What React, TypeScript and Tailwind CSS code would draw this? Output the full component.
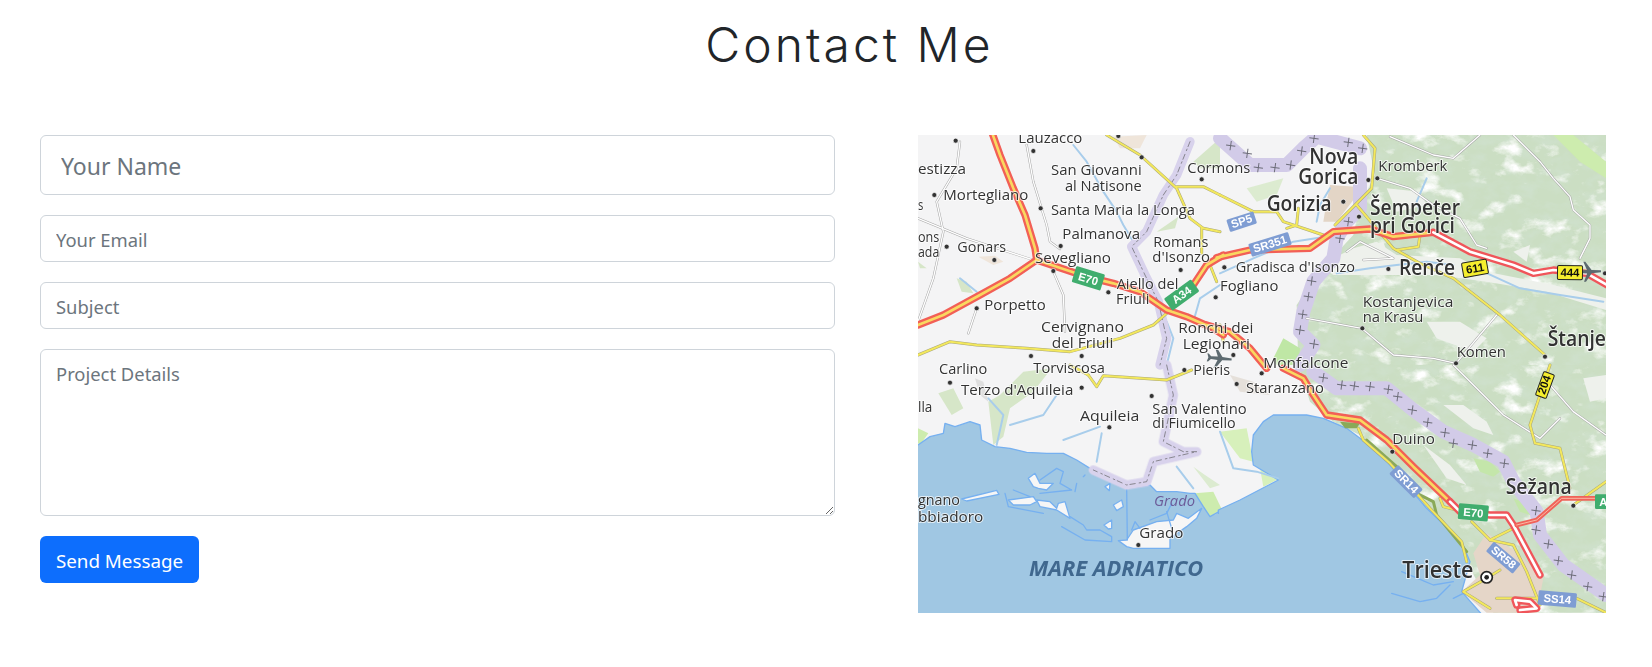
type Q = 'nw' | 'ne' | 'sw' | 'se';

// map coordinates are written per quadrant, at 3x, then scaled down
const T: Record<Q, string> = {
  nw: 'translate(900 125) scale(.33333)',
  ne: 'translate(1220 125) scale(.33333)',
  sw: 'translate(900 365) scale(.33333)',
  se: 'translate(1220 365) scale(.33333)',
};

const green: [Q, string][] = [
  ['ne', '440,30 1158,30 1158,720 235,720 230,540 285,460 340,395 400,330 420,240 465,150'],
  ['se', '235,0 1158,0 1158,743 820,743 725,560 620,430 505,295 420,210 340,170 270,110'],
];
const greenPatch: [Q, string, string][] = [
  ['ne', '1000,30 1060,30 1158,110 1158,160 1080,110', '#cdecae'],
  ['ne', '160,700 190,640 240,670 235,720 170,720', '#bfe7a5'],
  ['se', '760,280 810,290 840,320 820,335 780,320', '#c4e6aa'],
  ['se', '880,400 930,420 930,450 900,440', '#c4e6aa'],
  ['se', '0,200 80,190 100,290 60,280', '#d7f0bb'],
  ['se', '120,310 180,340 130,365', '#d7f0bb'],
  ['sw', '300,90 370,20 455,10 400,80 330,130 310,215 280,240 265,110', '#d6e6c8'],
  ['sw', '115,85 160,70 190,130 155,150', '#d6e6c8'],
  ['sw', '54,190 85,205 60,240 54,235', '#cdecae'],
  ['sw', '880,305 915,330 960,360 930,370', '#dcebd0'],
  ['nw', '170,460 200,470 220,505 185,500', '#d6e6c8'],
  ['nw', '770,320 835,275 825,310', '#d6e6c8'],
  ['nw', '54,410 80,430 60,430', '#d6e6c8'],
  ['nw', '880,110 960,40 960,130 900,130', '#d6e6c8'],
  ['ne', '80,190 190,160 170,210 110,230', '#dcebd0'],
];
const white: [Q, string][] = [
  ['ne', '400,370 470,350 530,390 720,400 800,440 1000,480 1158,520 1158,555 980,500 800,470 650,450 500,450 340,450 300,420'],
  ['ne', '620,590 720,590 800,640 760,680 650,640'],
  ['se', '670,120 730,120 800,170 820,210 760,190'],
  ['se', '1090,40 1158,30 1158,100 1110,110'],
  ['se', '610,240 690,300 740,360 680,340'],
  ['ne', '880,380 930,360 920,410'],
  ['ne', '500,190 600,200 620,240 530,260'],
  ['ne', '450,360 490,350 500,380 450,380'],
];
const beige: [Q, string, string][] = [
  ['ne', '330,180 405,185 400,225 350,290 310,290 318,240', '#e3d5c6'],
  ['se', '760,565 800,505 890,560 970,640 950,743 800,743 725,680 780,630', '#e5d6c8'],
  ['nw', '235,395 285,392 310,410 280,420', '#efe5da'],
  ['nw', '640,35 740,30 720,70 660,70', '#efe5da'],
  ['sw', '225,40 250,50 265,110 240,90', '#dedede'],
  ['se', '30,30 100,50 150,90 60,80', '#e5e0da'],
];
const seaW = '40,240 54,240 90,215 130,205 135,175 165,185 210,170 240,180 245,225 285,245 330,250 380,262 440,265 490,265 530,285 570,310 620,335 680,370 750,360 770,380 830,380 870,385 885,385 910,425 930,455 965,435 965,765 40,765';
const seaE = '-5,435 60,405 175,345 125,315 100,300 95,260 100,210 130,170 160,150 260,150 310,160 380,190 420,220 505,295 620,430 725,530 750,590 725,680 800,765 -5,765';
const islands: string[] = [
  '655,527 680,525 700,495 770,470 820,465 830,445 865,460 905,430 890,460 860,485 810,520 810,550 700,550 680,545',
  '385,340 405,325 420,355 460,355 440,375 415,370 400,365',
  '325,405 400,395 410,410 390,420 340,420',
  '410,405 450,410 470,430 475,415 495,410 510,460 470,435 420,425',
  '640,420 665,405 670,425 650,437',
  '615,365 630,355 628,377',
  '612,480 635,465 635,490 625,492',
  '185,402 290,376 297,388 200,408',
];
const lagoon: [Q, string][] = [
  ['sw', '315,385 325,425 430,445'],
  ['sw', '340,375 390,395'],
  ['sw', '420,345 470,310 490,320 480,355 515,375 420,385'],
  ['sw', '485,485 555,525 635,530 635,515 600,495 560,495 550,480 510,455'],
  ['sw', '680,370 682,525'],
  ['sw', '695,495 705,470 720,490'],
  ['sw', '750,465 800,445 815,415'],
  ['sw', '800,440 815,490'],
  ['sw', '555,330 550,335'],
  ['sw', '530,355 525,380'],
  ['se', '545,620 640,660 700,650'],
  ['se', '515,685 600,710 650,700 690,660'],
  ['se', '730,685 700,700'],
];
const rivers: [Q, string][] = [
  ['nw', '520,60 560,110 610,200 650,260 670,300 700,350'],
  ['nw', '880,590 900,520 960,480'],
  ['nw', '800,590 820,640 800,720'],
  ['ne', '0,445 100,400 220,350 350,330'],
  ['ne', '330,190 300,240 290,290'],
  ['ne', '350,445 450,430 530,420 620,410 700,420'],
  ['ne', '620,160 590,230 600,260'],
  ['ne', '790,440 900,490 1020,510 1150,530'],
  ['sw', '265,100 310,150 290,240'],
  ['sw', '470,90 430,150 330,180'],
  ['sw', '490,225 600,185'],
  ['sw', '605,205 590,290'],
  ['sw', '830,305 880,370'],
  ['se', '0,200 40,310 110,320 175,340'],
  ['nw', '180,460 230,500'],
];
const borderWide: [Q, string][] = [
  ['ne', '0,40 90,120 200,120 250,70 290,35 420,70'],
  ['ne', '420,130 420,250 380,290 350,340 340,400 280,470 250,560 240,620 280,660 240,720'],
  ['se', '280,20 350,70 500,70 580,135 670,200 760,240 850,290 880,350 950,440 960,510 1030,600 1158,690'],
];
const borderNarrow: [Q, string][] = [
  ['nw', '870,50 830,150 790,210 740,320 695,365 735,450 775,530 800,640 780,720'],
  ['sw', '800,0 820,90 790,230 850,260 890,260 760,290 740,350 680,360 580,315'],
];
const crosses: [Q, number, number][] = [
  ['ne', 32, 62], ['ne', 82, 85], ['ne', 115, 128], ['ne', 165, 128], ['ne', 212, 120], ['ne', 245, 78], ['ne', 282, 40],
  ['ne', 385, 52], ['ne', 428, 70], ['ne', 385, 290], ['ne', 360, 340], ['ne', 275, 468], ['ne', 265, 515], ['ne', 248, 568], ['ne', 240, 615], ['ne', 282, 657],
  ['se', 310, 38], ['se', 365, 60], ['se', 403, 63], ['se', 450, 65], ['se', 505, 73], ['se', 533, 95], ['se', 577, 135], ['se', 623, 172], ['se', 675, 203], ['se', 700, 235], ['se', 757, 240], ['se', 803, 265], ['se', 853, 295],
  ['se', 948, 437], ['se', 948, 495], ['se', 985, 537], ['se', 1015, 587], ['se', 1055, 630], ['se', 1103, 665], ['se', 1150, 695],
];
const thin: [Q, string][] = [
  ['nw', '380,60 400,170 440,300 450,350 480,372'],
  ['nw', '54,280 200,340 400,405'],
  ['nw', '460,440 490,510 495,620'],
  ['nw', '180,50 170,130 110,230 130,320 100,460 54,590'],
  ['nw', '230,550 205,625'],
  ['ne', '880,30 960,110 1000,160 1050,215 1060,255 1110,300 1110,340 1080,400'],
  ['ne', '780,30 700,100 640,90 510,35'],
  ['ne', '472,160 570,190 640,240 720,280 770,360 800,370'],
  ['ne', '430,405 520,400 420,350 380,380'],
  ['ne', '260,580 425,610 520,690 640,700 708,715 830,570'],
  ['se', '700,0 770,70 850,150 960,220 1020,160'],
  ['se', '990,60 1060,140 1158,210'],
];
const yellow: [Q, string][] = [
  ['nw', '620,30 720,90 830,190 870,280 910,310 960,320'],
  ['nw', '830,185 910,185 960,210'],
  ['nw', '54,690 150,650 230,660 380,670 510,680 660,640 760,600 800,565'],
  ['nw', '905,310 905,385'],
  ['nw', '930,420 950,470'],
  ['sw', '565,30 590,65 610,32 800,45 875,15'],
  ['sw', '510,0 565,30'],
  ['ne', '430,30 465,70 455,190 410,235 345,300'],
  ['ne', '0,210 100,260 170,260 190,290 310,330'],
  ['ne', '235,250 230,300 200,310'],
  ['ne', '410,240 520,370 600,415 700,460 840,570 975,690'],
  ['ne', '600,330 595,365 530,375'],
  ['ne', '0,600 10,650'],
  ['se', '990,0 930,180 945,235 1020,250 1050,370'],
  ['se', '415,190 430,225 510,295 630,430 725,530 740,590'],
  ['se', '660,400 670,425 710,435'],
  ['se', '755,470 810,525 880,540 920,620 960,720'],
  ['se', '810,525 890,485'],
  ['se', '1060,420 1158,350'],
  ['se', '840,615 800,640 730,680 810,730'],
  ['se', '830,700 960,700'],
  ['se', '1070,700 1158,743'],
];
const motorway: [Q, string][] = [
  ['nw', '275,20 300,90 340,190 375,270 405,370 410,405'],
  ['nw', '410,405 330,460 240,510 130,570 54,600'],
  ['nw', '410,405 470,425 560,455 640,475 720,500 800,555 860,575 940,610 970,630'],
  ['nw', '870,495 920,420 970,390'],
  ['ne', '-10,398 90,375 270,370 340,320 450,312 520,335 640,322'],
  ['ne', '-40,600 30,620 90,670 140,730'],
  ['se', '190,10 250,40 280,90 320,150 420,165 500,225 580,305 690,410'],
];
const whiteway: [Q, string][] = [
  ['ne', '640,322 750,380 880,420 940,445 1000,435 1100,445 1170,485'],
  ['se', '690,410 720,440 810,450 860,450 880,480 960,630'],
  ['se', '890,720 885,705 930,710 950,730 900,735'],
];
const redOnly: [Q, string][] = [
  ['se', '890,480 950,465 1025,400 1158,400'],
];
const dots: [Q, number, number][] = [
  ['nw', 167, 47], ['nw', 400, 78], ['nw', 103, 210], ['nw', 422, 250], ['nw', 482, 363], ['nw', 140, 365], ['nw', 283, 405], ['nw', 460, 438], ['nw', 625, 502], ['nw', 230, 550], ['nw', 545, 693], ['nw', 393, 693], ['nw', 725, 97], ['nw', 655, 33], ['nw', 905, 163], ['nw', 842, 435], ['nw', 947, 517],
  ['ne', 445, 165], ['ne', 472, 160], ['ne', 370, 230], ['ne', 417, 275], ['ne', 505, 432], ['ne', 13, 427], ['ne', 427, 610], ['ne', 975, 695], ['ne', 1155, 445], ['ne', 708, 715], ['ne', 40, 690],
  ['sw', 150, 53], ['sw', 545, 68], ['sw', 755, 93], ['sw', 628, 187], ['sw', 853, 15], ['sw', 715, 540],
  ['se', 125, 25], ['se', 50, 57], ['se', 517, 260], ['se', 1060, 422],
];
// text, x, baseline, width, size
const labels: [Q, string, number, number, number, number][] = [
  ['nw', 'Lauzacco', 355, 55, 192, 45],
  ['nw', 'estizza', 54, 146, 144, 45],
  ['nw', 'Mortegliano', 130, 225, 255, 45],
  ['nw', 's', 54, 255, 16, 45],
  ['nw', 'ons', 54, 352, 64, 45],
  ['nw', 'ada', 54, 395, 64, 45],
  ['nw', 'Gonars', 172, 380, 146, 45],
  ['nw', 'San Giovanni', 453, 150, 272, 45],
  ['nw', 'al Natisone', 495, 197, 230, 45],
  ['nw', 'Santa Maria la Longa', 453, 270, 432, 45],
  ['nw', 'Palmanova', 487, 343, 233, 45],
  ['nw', 'Romans', 760, 367, 165, 45],
  ['nw', "d'Isonzo", 757, 410, 173, 45],
  ['nw', 'Sevegliano', 405, 415, 228, 45],
  ['nw', 'Aiello del', 650, 492, 185, 45],
  ['nw', 'Friuli', 648, 536, 100, 45],
  ['nw', 'Porpetto', 253, 555, 184, 45],
  ['nw', 'Cervignano', 423, 620, 249, 45],
  ['nw', 'del Friuli', 455, 668, 185, 45],
  ['nw', 'Cormons', 862, 145, 189, 45],
  ['nw', 'Ronchi dei', 835, 623, 225, 45],
  ['nw', 'Legionari', 848, 672, 202, 45],
  ['sw', 'Torviscosa', 400, 25, 215, 45],
  ['sw', 'Carlino', 117, 28, 145, 45],
  ['sw', "Terzo d'Aquileia", 183, 90, 337, 45],
  ['sw', 'Aquileia', 540, 168, 178, 45],
  ['sw', 'San Valentino', 757, 147, 283, 45],
  ['sw', 'di Fiumicello', 757, 190, 250, 45],
  ['sw', 'Pieris', 880, 30, 110, 45],
  ['sw', 'lla', 54, 142, 43, 45],
  ['sw', 'gnano', 54, 420, 126, 42],
  ['sw', 'bbiadoro', 54, 470, 196, 42],
  ['sw', 'Grado', 718, 518, 132, 45],
  ['ne', 'Kromberk', 475, 137, 207, 45],
  ['ne', "Gradisca d'Isonzo", 47, 442, 358, 45],
  ['ne', 'Fogliano', 0, 497, 175, 45],
  ['ne', 'Kostanjevica', 428, 545, 272, 45],
  ['ne', 'na Krasu', 428, 590, 182, 45],
  ['ne', 'Komen', 710, 697, 148, 45],
  ['ne', 'Monfalcone', 130, 729, 255, 45],
  ['se', 'Staranzano', 78, 85, 234, 45],
  ['se', 'Duino', 517, 237, 128, 45],
];
const bigLabels: [Q, string, number, number, number, number][] = [
  ['ne', 'Nova', 268, 118, 147, 62],
  ['ne', 'Gorica', 235, 178, 180, 62],
  ['ne', 'Gorizia', 140, 258, 195, 62],
  ['ne', 'Šempeter', 450, 270, 270, 62],
  ['ne', 'pri Gorici', 450, 325, 255, 62],
  ['ne', 'Renče', 537, 450, 168, 62],
  ['ne', 'Štanje', 983, 662, 175, 62],
  ['se', 'Sežana', 857, 388, 198, 62],
  ['se', 'Trieste', 547, 640, 213, 68],
];
const shields: [Q, string, number, number, number, number, number, string][] = [
  ['nw', 'E70', 565, 460, 90, 50, 17, 'g'],
  ['nw', 'A34', 845, 510, 100, 44, -36, 'g'],
  ['ne', 'SP5', 65, 290, 85, 38, -18, 'b'],
  ['ne', 'SR351', 150, 358, 125, 40, -17, 'b'],
  ['ne', '611', 765, 430, 75, 44, -10, 'y'],
  ['ne', '444', 1050, 443, 75, 42, 1, 'y'],
  ['se', '204', 975, 60, 75, 34, -70, 'y'],
  ['se', 'SR14', 558, 350, 105, 38, 45, 'b'],
  ['se', 'E70', 760, 442, 90, 48, 5, 'g'],
  ['se', 'A', 1150, 410, 50, 44, 0, 'g'],
  ['se', 'SR58', 850, 578, 105, 38, 40, 'b'],
  ['se', 'SS14', 1012, 702, 115, 44, 5, 'b'],
];
const shieldColor: Record<string, string> = { g: '#41ad6e', b: '#7f9dd3', y: '#f5ee2e' };

function Lines({ data, color, w, dash }: { data: [Q, string][]; color: string; w: number; dash?: string }) {
  return (
    <>
      {data.map(([q, pts], i) => (
        <polyline key={i} transform={T[q]} points={pts} fill="none" stroke={color} strokeWidth={w} strokeDasharray={dash} strokeLinejoin="round" strokeLinecap="round" />
      ))}
    </>
  );
}

function Plane({ q, x, y, r }: { q: Q; x: number; y: number; r: number }) {
  return (
    <g transform={`${T[q]} translate(${x} ${y}) rotate(${r})`} fill="#5d6b70">
      <path d="M-3 -38 L3 -38 L5 -10 L30 8 L30 14 L5 4 L4 24 L12 32 L12 36 L0 32 L-12 36 L-12 32 L-4 24 L-5 4 L-30 14 L-30 8 L-5 -10 Z" />
    </g>
  );
}

function MapDrawing() {
  return (
    <svg viewBox="918 135 688 478" width={688} height={478} className="block">
      <defs>
        <filter id="soft" x="0" y="0" width="100%" height="100%">
          <feGaussianBlur stdDeviation="0.35" />
        </filter>
        <filter id="hills" x="0" y="0" width="100%" height="100%">
          <feTurbulence type="fractalNoise" baseFrequency="0.012 0.018" numOctaves={5} seed={7} />
          <feColorMatrix values="0 0 0 0 1  0 0 0 0 1  0 0 0 0 1  4 0 0 0 -2.25" />
          <feComposite in2="SourceAlpha" operator="in" />
        </filter>
        <filter id="shade" x="0" y="0" width="100%" height="100%">
          <feTurbulence type="fractalNoise" baseFrequency="0.02 0.03" numOctaves={4} seed={21} />
          <feColorMatrix values="0 0 0 0 0.62  0 0 0 0 0.75  0 0 0 0 0.6  2.4 0 0 0 -0.95" />
          <feComposite in2="SourceAlpha" operator="in" />
        </filter>
      </defs>
      <rect x="918" y="135" width="688" height="478" fill="#f4f4f5" />
      <g filter="url(#soft)">
        {beige.filter((b) => b[0] === 'sw' || b[2] === '#efe5da').map(([q, pts, c], i) => (
          <polygon key={i} transform={T[q]} points={pts} fill={c} />
        ))}
        {green.map(([q, pts], i) => (
          <polygon key={i} transform={T[q]} points={pts} fill="#cbdec3" />
        ))}
        {green.map(([q, pts], i) => (
          <polygon key={i} transform={T[q]} points={pts} fill="#000" filter="url(#shade)" />
        ))}
        {green.map(([q, pts], i) => (
          <polygon key={i} transform={T[q]} points={pts} fill="#000" filter="url(#hills)" />
        ))}
        {white.map(([q, pts], i) => (
          <polygon key={i} transform={T[q]} points={pts} fill="#eef1ec" />
        ))}
        {greenPatch.map(([q, pts, c], i) => (
          <polygon key={i} transform={T[q]} points={pts} fill={c} />
        ))}
        {beige.filter((b) => b[0] !== 'sw' && b[2] !== '#efe5da').map(([q, pts, c], i) => (
          <polygon key={i} transform={T[q]} points={pts} fill={c} />
        ))}
        <polygon transform={T.sw} points="885,385 940,380 965,432 930,455 910,425" fill="#cdecae" />
        <polygon transform={T.sw} points={seaW} fill="#a0c7e3" stroke="#76b0f0" strokeWidth={4} strokeLinejoin="round" />
        <polygon transform={T.se} points={seaE} fill="#a0c7e3" stroke="#76b0f0" strokeWidth={4} strokeLinejoin="round" />
        <rect x="1215" y="514" width="10" height="100" fill="#a0c7e3" />
        {islands.map((pts, i) => (
          <polygon key={i} transform={T.sw} points={pts} fill="#f6f6f6" stroke="#76b0f0" strokeWidth={4} strokeLinejoin="round" />
        ))}
        <Lines data={lagoon} color="#76b0f0" w={4} />
        <polygon transform={T.se} points="360,170 420,175 410,190 375,190" fill="#8aa958" />
        <Lines data={[['se', '440,225 530,305'], ['se', '590,385 640,410 650,450 740,560']]} color="#8aa958" w={9} />
        <Lines data={rivers} color="#a8cdeb" w={6} />
        <Lines data={borderWide} color="#d2cbe8" w={42} />
        <Lines data={borderNarrow} color="#d8d2ec" w={28} />
        <Lines data={borderNarrow} color="#77767c" w={2.5} dash="16 8 5 12" />
        <g stroke="#6c6c78" strokeWidth={3}>
          {crosses.map(([q, x, y], i) => (
            <g key={i} transform={`${T[q]} translate(${x} ${y}) rotate(8)`}>
              <line x1={-14} x2={14} y1={0} y2={0} />
              <line x1={0} x2={0} y1={-14} y2={14} />
            </g>
          ))}
        </g>
        <Lines data={thin} color="#a6a6a6" w={7} />
        <Lines data={thin} color="#ffffff" w={4} />
        <Lines data={yellow} color="#a9a77a" w={9} />
        <Lines data={yellow} color="#f3e85c" w={6} />
        <Lines data={motorway} color="#f25f56" w={22} />
        <Lines data={motorway} color="#f9d860" w={8} />
        <Lines data={whiteway} color="#f0555a" w={22} />
        <Lines data={whiteway} color="#ffffff" w={8} />
        <Lines data={redOnly} color="#f0645a" w={14} />
        <Lines data={redOnly} color="#f9b8a4" w={3} />
        <Plane q="ne" x={1105} y={440} r={88} />
        <Plane q="nw" x={957} y={700} r={95} />
        {dots.map(([q, x, y], i) => (
          <circle key={i} transform={T[q]} cx={x} cy={y} r={7.5} fill="#333" stroke="#fff" strokeWidth={2} />
        ))}
        <circle transform={T.se} cx={800} cy={637} r={17} fill="#fff" stroke="#222" strokeWidth={5} />
        <circle transform={T.se} cx={800} cy={637} r={7} fill="#222" />
        {shields.map(([q, t, x, y, w, h, r, k], i) => (
          <g key={i} transform={`${T[q]} translate(${x} ${y}) rotate(${r})`}>
            <rect x={-w / 2} y={-h / 2} width={w} height={h} rx={4} fill={shieldColor[k]} stroke={k === 'y' ? '#222' : 'none'} strokeWidth={3} />
            <text y={h * 0.27} textAnchor="middle" fontFamily="'Liberation Sans', sans-serif" fontWeight={700} fontSize={34} fill={k === 'y' ? '#111' : '#fff'}>{t}</text>
          </g>
        ))}
        <g fontFamily="'Open Sans', 'Noto Sans', sans-serif" fill="#333" stroke="#fff" strokeOpacity={0.7} strokeWidth={6} strokeLinejoin="round" style={{ paintOrder: 'stroke' }}>
          {labels.map(([q, t, x, y, w, s], i) => (
            <text key={i} transform={T[q]} x={x} y={y} textLength={w} lengthAdjust="spacingAndGlyphs" fontSize={s}>{t}</text>
          ))}
          {bigLabels.map(([q, t, x, y, w, s], i) => (
            <text key={i} transform={T[q]} x={x} y={y} textLength={w} lengthAdjust="spacingAndGlyphs" fontSize={s} fontWeight={600}>{t}</text>
          ))}
        </g>
        <g fontFamily="'Open Sans', sans-serif" fontStyle="italic">
          <text transform={T.sw} x={762} y={422} textLength={123} lengthAdjust="spacingAndGlyphs" fontSize={42} fill="#6b5a98">Grado</text>
          <text transform={T.sw} x={387} y={633} textLength={523} lengthAdjust="spacingAndGlyphs" fontSize={66} fontWeight={700} fill="#41688f">MARE ADRIATICO</text>
        </g>
      </g>
    </svg>
  );
}

const inputCls =
  "block w-full h-[47px] rounded-md border border-[#ced4da] bg-white px-[15px] pt-[2px] text-[18.4px] text-[#212529] placeholder:text-[#6c757d] font-['Noto_Sans',sans-serif]";

export default function App() {
  return (
    <div className="min-h-[667px] bg-white">
      <h1 className="h-[135px] pt-[16px] pl-[47px] text-center text-[48px] leading-[57px] tracking-[3px] font-light text-[#212529] font-['Inter',sans-serif]">
        Contact Me
      </h1>
      <div className="flex justify-between pl-10 pr-[46px]">
        <form className="flex w-[795px] flex-col gap-5">
          <input
            placeholder="Your Name"
            className="block h-[60px] w-full rounded-md border border-[#ced4da] bg-white px-5 pt-[2px] text-[23px] placeholder:text-[#6c757d] font-['Noto_Sans',sans-serif]"
          />
          <input placeholder="Your Email" className={inputCls} />
          <input placeholder="Subject" className={inputCls} />
          <textarea
            placeholder="Project Details"
            className="block h-[167px] w-full rounded-md border border-[#ced4da] bg-white px-[15px] py-[10px] text-[18.4px] placeholder:text-[#6c757d] font-['Noto_Sans',sans-serif]"
          />
          <div>
            <button
              type="button"
              className="h-[47px] w-[159px] rounded-md bg-[#0d6efd] pt-[3px] text-[18.8px] text-white font-['Noto_Sans',sans-serif]"
            >
              Send Message
            </button>
          </div>
        </form>
        <div className="h-[478px] w-[688px] overflow-hidden">
          <MapDrawing />
        </div>
      </div>
    </div>
  );
}
